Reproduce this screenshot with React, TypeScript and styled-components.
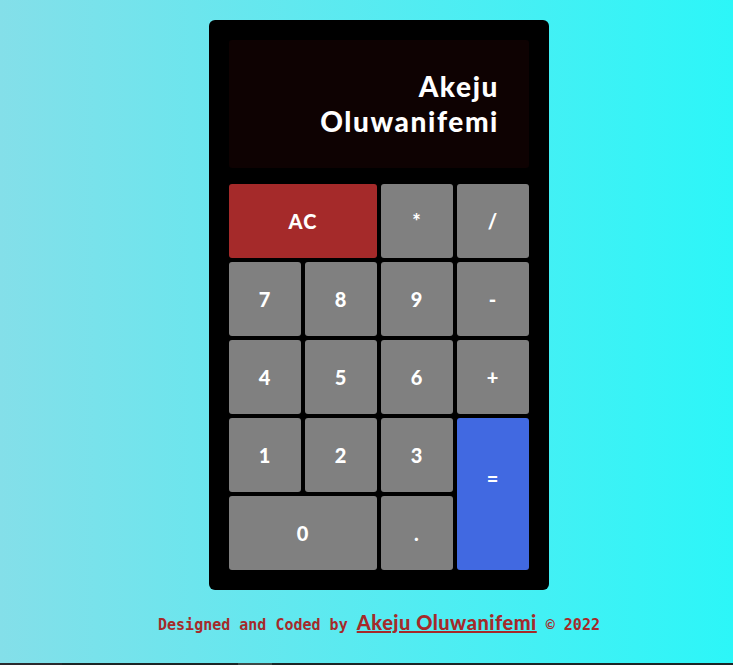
import React from "react";
import styled, { createGlobalStyle } from "styled-components";

const GlobalStyle = createGlobalStyle`
  html, body {
    margin: 0;
    padding: 0;
    min-height: 100%;
  }
  body {
    min-height: 100vh;
    background: linear-gradient(to right, #84dfe9, #2cf6f8);
    font-family: "Lato", "Open Sans", sans-serif;
  }
`;

const Page = styled.div`
  display: flex;
  flex-direction: column;
  align-items: center;
  padding: 20px 0 0 25px;
`;

const Calculator = styled.div`
  width: 300px;
  padding: 20px;
  background: #000;
  border-radius: 6px;
  display: flex;
  flex-direction: column;
  gap: 16px;
`;

const Display = styled.div`
  height: 128px;
  background: #0e0202;
  border-radius: 3px;
  display: flex;
  align-items: center;
  justify-content: flex-end;
  padding: 0 30px 0 0;
  box-sizing: border-box;
`;

const DisplayText = styled.div`
  max-width: 220px;
  text-align: right;
  color: #fff;
  font-family: "Lato", sans-serif;
  font-weight: 900;
  font-size: 28px;
  letter-spacing: 1.6px;
  line-height: 35px;
`;

const Keypad = styled.div`
  display: grid;
  grid-template-columns: repeat(4, 72px);
  grid-template-rows: repeat(5, 74px);
  gap: 4px;
`;

type Variant = "num" | "clear" | "equals";

const Key = styled.button<{ $variant?: Variant; $wide?: boolean; $tall?: boolean }>`
  border: none;
  margin: 0;
  padding: 0 0 ${(p) => (p.$tall ? "32px" : "0")};
  border-radius: 3px;
  color: #fff;
  font-family: "Lato", sans-serif;
  font-weight: 900;
  font-size: 20px;
  letter-spacing: 1px;
  cursor: pointer;
  display: flex;
  align-items: center;
  justify-content: center;
  background: ${(p) =>
    p.$variant === "clear" ? "#a52a2a" : p.$variant === "equals" ? "#4169e1" : "#808080"};
  grid-column: ${(p) => (p.$wide ? "span 2" : "auto")};
  grid-row: ${(p) => (p.$tall ? "span 2" : "auto")};
`;

const Footer = styled.p`
  margin: 20px 0 0;
  font-family: "DejaVu Sans Mono", "Liberation Mono", monospace;
  font-weight: 700;
  font-size: 15px;
  color: #a52a2a;
  white-space: pre;
`;

const FooterLink = styled.a`
  font-family: "Lato", sans-serif;
  font-weight: 900;
  font-size: 20px;
  letter-spacing: 0.5px;
  color: #a52a2a;
  text-decoration: underline;
`;

const ScrollStrip = styled.div`
  position: fixed;
  left: 0;
  right: 0;
  bottom: 0;
  height: 2px;
  background: #1c2626;
  display: flex;
`;

const StripPart = styled.div<{ $w: number; $c: string }>`
  width: ${(p) => p.$w}px;
  background: ${(p) => p.$c};
`;

const keys: { label: string; variant?: Variant; wide?: boolean; tall?: boolean }[] = [
  { label: "AC", variant: "clear", wide: true },
  { label: "*" },
  { label: "/" },
  { label: "7" },
  { label: "8" },
  { label: "9" },
  { label: "-" },
  { label: "4" },
  { label: "5" },
  { label: "6" },
  { label: "+" },
  { label: "1" },
  { label: "2" },
  { label: "3" },
  { label: "=", variant: "equals", tall: true },
  { label: "0", wide: true },
  { label: "." },
];

export default function App() {
  return (
    <>
      <GlobalStyle />
      <Page>
        <Calculator>
          <Display>
            <DisplayText>Akeju Oluwanifemi</DisplayText>
          </Display>
          <Keypad>
            {keys.map((k) => (
              <Key key={k.label} $variant={k.variant} $wide={k.wide} $tall={k.tall}>
                {k.label}
              </Key>
            ))}
          </Keypad>
        </Calculator>
        <Footer>
          Designed and Coded by <FooterLink href="#">Akeju Oluwanifemi</FooterLink> © 2022
        </Footer>
      </Page>
      <ScrollStrip>
        <StripPart $w={62} $c="#2a2a2e" />
        <StripPart $w={176} $c="#1c2626" />
        <StripPart $w={34} $c="#3c4a48" />
      </ScrollStrip>
    </>
  );
}
